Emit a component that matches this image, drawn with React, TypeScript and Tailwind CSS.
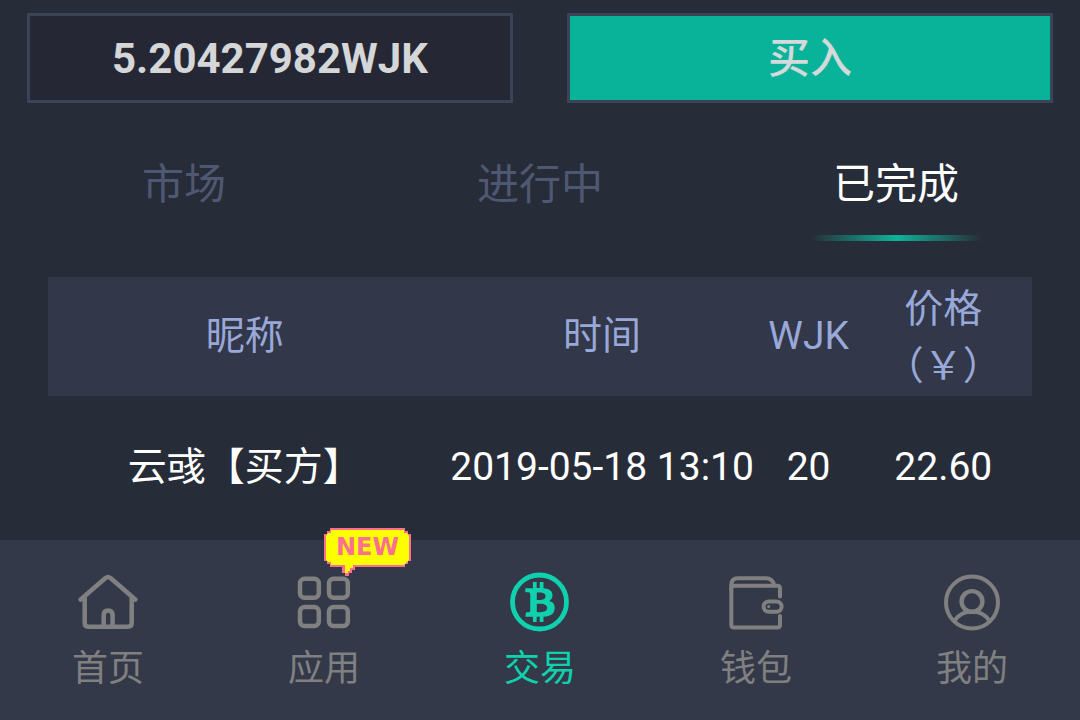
import type { ReactNode } from "react";
import { FaBtc } from "react-icons/fa";

type NavItem = {
  label: string;
  icon: ReactNode;
  active?: boolean;
  isNew?: boolean;
};

type Order = {
  name: string;
  time: string;
  amount: string;
  price: string;
};

const tabs = ["市场", "进行中", "已完成"];

const orders: Order[] = [
  { name: "云彧【买方】", time: "2019-05-18 13:10", amount: "20", price: "22.60" },
];

const iconProps = {
  viewBox: "0 0 60 60",
  fill: "none",
  stroke: "currentColor",
  strokeLinecap: "round" as const,
  strokeLinejoin: "round" as const,
  className: "size-15",
  "aria-hidden": true,
};

const HomeIcon = () => (
  <svg {...iconProps} strokeWidth="4.5">
    <path d="M2.7 27.5 27.5 6Q30 4 32.5 6L57.3 27.5" />
    <path d="M6.7 26V51Q6.7 54.7 10.4 54.7H50Q53.7 54.7 53.7 51V26" />
    <path d="M25.7 54V43Q25.7 38.6 30.1 38.6T34.6 43V54" />
  </svg>
);

const AppsIcon = () => (
  <svg {...iconProps} strokeWidth="4.5">
    <rect x="6" y="6.8" width="18.8" height="19" rx="4.5" />
    <rect x="35" y="6.8" width="18.8" height="19" rx="4.5" />
    <rect x="6" y="35" width="18.8" height="19" rx="4.5" />
    <rect x="35" y="35" width="18.8" height="19" rx="4.5" />
  </svg>
);

const TradeIcon = () => (
  <svg {...iconProps}>
    <circle cx="29.5" cy="30" r="27" strokeWidth="4.8" />
    <FaBtc x="10" y="10" size={40} />
  </svg>
);

const WalletIcon = () => (
  <svg {...iconProps} strokeWidth="4">
    <path d="M54 24.5V16.5Q54 13.8 51.3 13.8H8Q5.3 13.8 5.3 16.5V52.7Q5.3 55.5 8 55.5H51.3Q54 55.5 54 52.7V44" />
    <path d="M5.3 17V13Q5.3 6.3 12 6.3H40Q46.5 6.3 48.5 13.5" />
    <rect x="37.6" y="29.4" width="18" height="10.4" rx="5.2" />
    <circle cx="42.7" cy="34.6" r="1.6" fill="currentColor" stroke="none" />
  </svg>
);

const UserIcon = () => (
  <svg {...iconProps} strokeWidth="4">
    <circle cx="30" cy="30.5" r="26" />
    <circle cx="30" cy="29.5" r="10.4" strokeWidth="4.4" />
    <path d="M12.3 48.7C17 42.5 23 39.6 30 39.6S43 42.5 47.7 48.7" />
  </svg>
);

const NewBadge = () => (
  <span className="absolute -top-11 left-[30px] h-12 w-[87px]">
    <svg viewBox="0 0 87 48" className="h-12 w-[87px]" aria-hidden="true">
      <path
        d="M6 0H81V3H84V6H87V33H84V36H81V39H31V42H28V45H25V48H21V45H18V39H6V36H3V33H0V6H3V3H6Z"
        fill="#ff6f91"
      />
      <path
        d="M7 2H80V5H83L85 8V32L83 34L80 37H29V40H26V43H24V45H21V37H7V34H4L2 32V8L4 5H7Z"
        fill="#fbff00"
      />
    </svg>
    <span className="absolute inset-x-0 top-0 text-center font-['DejaVu_Sans',sans-serif] text-[24px] leading-[39px] font-bold text-[#ff6f91]">
      NEW
    </span>
  </span>
);

const navItems: NavItem[] = [
  { label: "首页", icon: <HomeIcon /> },
  { label: "应用", icon: <AppsIcon />, isNew: true },
  { label: "交易", icon: <TradeIcon />, active: true },
  { label: "钱包", icon: <WalletIcon /> },
  { label: "我的", icon: <UserIcon /> },
];

const Tabs = () => (
  <div className="mt-[50px] grid grid-cols-3 px-1.5" role="tablist">
    {tabs.map((tab, i) => {
      const selected = i === tabs.length - 1;
      return (
        <button
          key={tab}
          type="button"
          role="tab"
          aria-selected={selected}
          className={`flex flex-col items-center text-[42px] leading-[63px] ${
            selected ? "text-white" : "text-[#4f5873]"
          }`}
        >
          {tab}
          {selected && (
            <span className="mt-[19px] h-1.5 w-[171px] bg-linear-to-r from-transparent via-[#0fb399] to-transparent" />
          )}
        </button>
      );
    })}
  </div>
);

const OrderTable = () => (
  <div className="mt-9 px-12">
    <table className="w-full table-fixed text-center text-[39px] leading-[57px]">
      <colgroup>
        <col className="w-[40%]" />
        <col className="w-[321px]" />
        <col className="w-[92px]" />
        <col />
      </colgroup>
      <thead className="bg-[#323749] text-[#98a8d8]">
        <tr>
          <th className="font-normal">昵称</th>
          <th className="font-normal">时间</th>
          <th className="font-normal">WJK</th>
          <th className="px-6 pt-1 pb-px font-normal">价格（￥）</th>
        </tr>
      </thead>
      <tbody className="text-white">
        {orders.map((order) => (
          <tr
            key={order.time}
            className="whitespace-nowrap *:pt-[43px] *:pb-[41px]"
          >
            <td>{order.name}</td>
            <td>{order.time}</td>
            <td>{order.amount}</td>
            <td>{order.price}</td>
          </tr>
        ))}
      </tbody>
    </table>
  </div>
);

const BottomNav = () => (
  <nav className="sticky bottom-0 grid grid-cols-5 bg-[#343949]">
    {navItems.map((item) => (
      <a
        key={item.label}
        href="#"
        className={`flex flex-col items-center gap-2.5 pt-8 pb-6 text-[36px] leading-[54px] ${
          item.active ? "text-[#0fd1ae]" : "text-[#808080]"
        }`}
      >
        <span className="relative">
          {item.icon}
          {item.isNew && <NewBadge />}
        </span>
        {item.label}
      </a>
    ))}
  </nav>
);

export default function App() {
  return (
    <div className="flex min-h-screen flex-col bg-[#272d38] font-['Roboto','Noto_Sans_CJK_SC',sans-serif]">
      <main className="flex-1">
        <div className="grid grid-cols-2 gap-[54px] px-[27px] pt-[13px]">
          <input
            type="text"
            readOnly
            aria-label="数量"
            value="5.20427982WJK"
            className="h-[90px] w-full border-3 border-[#3b4356] bg-[#252834] text-center text-[42px] font-bold text-[#d4d6d8]"
          />
          <button
            type="button"
            className="h-[90px] border-3 border-[#3b4356] bg-[#09b39a] text-[42px] font-medium text-[#d4d9da]"
          >
            买入
          </button>
        </div>
        <Tabs />
        <OrderTable />
      </main>
      <BottomNav />
    </div>
  );
}
